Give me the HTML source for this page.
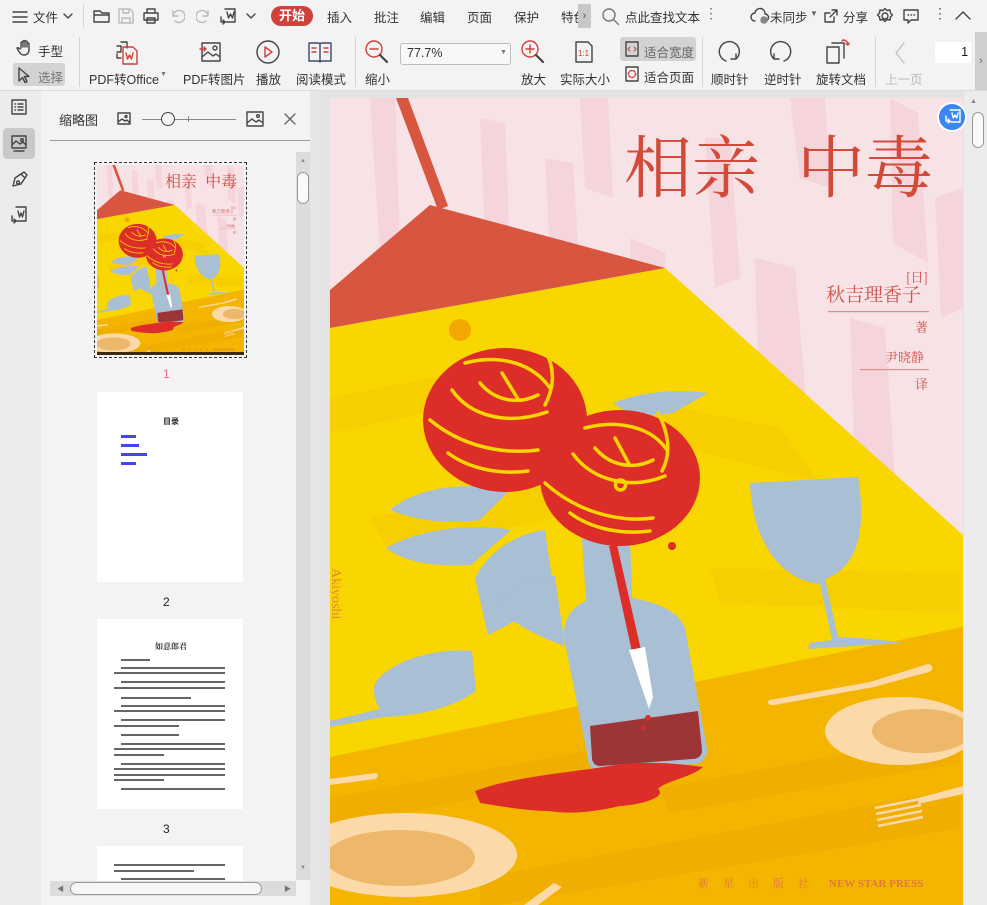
<!DOCTYPE html>
<html><head><meta charset="utf-8">
<style>
*{margin:0;padding:0;box-sizing:border-box}
body{width:987px;height:905px;overflow:hidden;background:#e6e6e6;font-family:"Liberation Sans","Noto Sans CJK SC",sans-serif;font-size:13px;color:#222;position:relative}
.a{position:absolute;white-space:nowrap}
.t{font-size:12.5px;color:#333}
svg.i{position:absolute;fill:none;stroke:#444;stroke-width:1.4;stroke-linecap:round;stroke-linejoin:round}
.sep{position:absolute;width:1px;background:#d4d4d4}
.ln{position:absolute;height:5px;background:#333;opacity:.75}
</style></head><body>
<div class="a" style="left:0;top:0;width:987px;height:91px;background:#f3f3f3;border-bottom:1px solid #dcdcdc"></div>
<svg class="i" style="left:11px;top:9px" width="18" height="16"><path d="M2 3h14M2 8h14M2 13h14"/></svg>
<div class="a t" style="left:33px;top:7px">文件</div>
<svg class="i" style="left:62px;top:11px" width="12" height="10" ><path d="M2 3l4 4 4-4"/></svg>
<div class="sep" style="left:83px;top:4px;height:24px"></div>
<svg class="i" style="left:92px;top:7px" width="20" height="18"><path d="M2 4h6l2 2h7v9H2z M2 8h15"/></svg>
<svg class="i" style="left:117px;top:7px;stroke:#bbb" width="18" height="18"><path d="M2 2h11l3 3v11H2z M6 2v4h6V2 M5 16v-5h8v5"/></svg>
<svg class="i" style="left:142px;top:7px" width="18" height="18"><path d="M5 6V2h8v4 M2 6h14v7H2z M5 11h8v5H5z"/></svg>
<svg class="i" style="left:169px;top:8px;stroke:#bbb" width="16" height="16"><path d="M4 3v5h5 M4 8a6 6 0 1 1 2 5"/></svg>
<svg class="i" style="left:196px;top:8px;stroke:#bbb" width="16" height="16"><path d="M12 3v5H7 M12 8a6 6 0 1 0-2 5"/></svg>
<svg class="i" style="left:218px;top:6px" width="20" height="20"><path d="M7 3h10v13H8 M9 6l1.5 6 2-4 2 4 1.5-6 M3 11v5h4 M5 14l2 2-2 2"/></svg>
<svg class="i" style="left:245px;top:11px" width="12" height="10"><path d="M2 3l4 4 4-4"/></svg>
<div class="a" style="left:271px;top:6px;width:42px;height:20px;border-radius:10px;background:#d0403c;color:#fff;font-size:13px;line-height:20px;text-align:center;font-weight:bold">开始</div>
<div class="a t" style="left:327px;top:7px">插入</div>
<div class="a t" style="left:374px;top:7px">批注</div>
<div class="a t" style="left:420px;top:7px">编辑</div>
<div class="a t" style="left:467px;top:7px">页面</div>
<div class="a t" style="left:514px;top:7px">保护</div>
<div class="a t" style="left:561px;top:7px;width:17px;overflow:hidden">特色</div>
<div class="a" style="left:578px;top:4px;width:13px;height:24px;background:#c8c8c8;color:#555;font-size:11px;line-height:24px;text-align:center">›</div>
<svg class="i" style="left:601px;top:7px;stroke:#777" width="20" height="20"><circle cx="8" cy="8" r="6"/><path d="M12.5 12.5l5 5"/></svg>
<div class="a t" style="left:625px;top:7px">点此查找文本</div>
<div class="a" style="left:704px;top:5px;color:#666;font-size:14px">⋮</div>
<svg class="i" style="left:750px;top:7px" width="20" height="18"><path d="M5 14a4 4 0 0 1 0-8 5 5 0 0 1 10 1 3.5 3.5 0 0 1 0 7"/><circle cx="14" cy="13" r="3" fill="#888" stroke="#888"/></svg>
<div class="a t" style="left:770px;top:7px">未同步</div>
<div class="a" style="left:810px;top:9px;font-size:8px;color:#666">▼</div>
<svg class="i" style="left:822px;top:7px" width="18" height="18"><path d="M10 3h5v5 M15 3l-7 7 M12 10v5H3V6h5"/></svg>
<div class="a t" style="left:843px;top:7px">分享</div>
<svg class="i" style="left:876px;top:7px" width="18" height="18"><circle cx="9" cy="9" r="3"/><path d="M9 1.5l2 2 3-.5.5 3 2 2-2 2-.5 3-3-.5-2 2-2-2-3 .5-.5-3-2-2 2-2 .5-3 3 .5z"/></svg>
<svg class="i" style="left:902px;top:7px" width="18" height="18"><path d="M2 3h14v10H9l-3 3v-3H2z M6 8h.5M9 8h.5M12 8h.5"/></svg>
<div class="a" style="left:933px;top:5px;color:#555;font-size:14px">⋮</div>
<svg class="i" style="left:954px;top:9px" width="18" height="12"><path d="M2 10l7-7 7 7"/></svg>

<svg class="i" style="left:16px;top:39px" width="18" height="18"><path d="M5 9V4a1 1 0 0 1 2 0v4V2.5a1 1 0 0 1 2 0V8V3a1 1 0 0 1 2 0v5V5a1 1 0 0 1 2 0v6c0 3-2 5-5 5s-4-2-6-5l-1-2c1-1 2 0 3 1"/></svg>
<div class="a t" style="left:38px;top:41px">手型</div>
<div class="a" style="left:13px;top:63px;width:52px;height:23px;background:#d3d3d3;border-radius:3px"></div>
<svg class="i" style="left:17px;top:66px" width="14" height="18"><path d="M2 2v13l3.5-3.5 2.5 5 2-1-2.5-5H12z"/></svg>
<div class="a t" style="left:38px;top:67px;color:#777">选择</div>
<div class="sep" style="left:79px;top:37px;height:50px"></div>
<svg class="i" style="left:113px;top:38px" width="28" height="28"><path d="M8 4h6v6 M4 8h4v6H4 M4 16v4h4" stroke="#444"/><path d="M13 15l1.5 6 2-4 2 4 1.5-6" stroke="#d0403c"/><path d="M10 9h10l4 4v13H10z" stroke="#d0403c"/></svg>
<div class="a t" style="left:89px;top:69px">PDF转Office</div>
<div class="a" style="left:160px;top:71px;font-size:7px;color:#777">▼</div>
<svg class="i" style="left:199px;top:40px" width="24" height="24"><path d="M3 3h18v18H3z M3 17l6-5 5 4 3-2 4 3"/><circle cx="16" cy="8" r="2"/><path d="M1 9h6M5 7l2 2-2 2" stroke="#d0403c"/></svg>
<div class="a t" style="left:183px;top:69px">PDF转图片</div>
<svg class="i" style="left:255px;top:39px" width="26" height="26"><circle cx="13" cy="13" r="11"/><path d="M10 8l7 5-7 5z" stroke="#d0403c"/></svg>
<div class="a t" style="left:256px;top:69px">播放</div>
<svg class="i" style="left:307px;top:41px;stroke:#3a4a6a" width="26" height="22"><path d="M2 2h10l1 1 1-1h10v18H14l-1 1-1-1H2z M13 3v17"/><path d="M5 7h4M5 11h4M17 7h4M17 11h4" stroke="#d0403c"/></svg>
<div class="a t" style="left:296px;top:69px">阅读模式</div>
<div class="sep" style="left:355px;top:37px;height:50px"></div>
<svg class="i" style="left:364px;top:39px" width="26" height="26"><circle cx="10" cy="10" r="8" stroke="#d0403c"/><path d="M6 10h8" stroke="#d0403c"/><path d="M16 16l7 7" stroke-width="2.2"/></svg>
<div class="a t" style="left:365px;top:69px">缩小</div>
<div class="a" style="left:400px;top:43px;width:111px;height:22px;background:#f8f8f8;border:1px solid #bdbdbd;border-radius:3px"></div>
<div class="a" style="left:407px;top:46px;font-size:12.5px;color:#333">77.7%</div>
<div class="a" style="left:500px;top:49px;font-size:7px;color:#777">▼</div>
<svg class="i" style="left:520px;top:39px" width="26" height="26"><circle cx="10" cy="10" r="8" stroke="#d0403c"/><path d="M6 10h8M10 6v8" stroke="#d0403c"/><path d="M16 16l7 7" stroke-width="2.2"/></svg>
<div class="a t" style="left:521px;top:69px">放大</div>
<svg class="i" style="left:574px;top:40px" width="20" height="24"><path d="M2 2h12l4 4v16H2z"/><text x="4" y="16" font-size="8" fill="#d0403c" stroke="none" font-family="Liberation Sans">1:1</text></svg>
<div class="a t" style="left:560px;top:69px">实际大小</div>
<div class="a" style="left:620px;top:37px;width:76px;height:24px;background:#d3d3d3;border-radius:3px"></div>
<svg class="i" style="left:625px;top:41px" width="14" height="16"><path d="M1 1h12v14H1z"/><path d="M5 6l-2 2 2 2M9 6l2 2-2 2" stroke="#d0403c" stroke-width="1"/></svg>
<div class="a t" style="left:644px;top:42px;color:#666">适合宽度</div>
<svg class="i" style="left:625px;top:66px" width="14" height="16"><path d="M1 1h12v14H1z"/><circle cx="7" cy="8" r="3.5" stroke="#d0403c" stroke-dasharray="2 1.5"/></svg>
<div class="a t" style="left:644px;top:67px">适合页面</div>
<div class="sep" style="left:702px;top:37px;height:50px"></div>
<svg class="i" style="left:716px;top:39px" width="26" height="26"><path d="M20 20a10 10 0 1 0-10 2 M20 15v5h-5"/></svg>
<div class="a t" style="left:711px;top:69px">顺时针</div>
<svg class="i" style="left:768px;top:39px" width="26" height="26"><path d="M6 20a10 10 0 1 1 10 2 M6 15v5h5"/></svg>
<div class="a t" style="left:764px;top:69px">逆时针</div>
<svg class="i" style="left:824px;top:38px" width="28" height="28"><path d="M3 9h12v16H3z M8 5h12v15"/><path d="M19 2a5 5 0 0 1 5 5 M22 6l2 1 1-2 M18 3l1-1" stroke="#d0403c"/></svg>
<div class="a t" style="left:816px;top:69px">旋转文档</div>
<div class="sep" style="left:875px;top:37px;height:50px"></div>
<svg class="i" style="left:893px;top:41px;stroke:#c0c0c0" width="14" height="24"><path d="M11 2L3 12l8 10"/></svg>
<div class="a t" style="left:885px;top:69px;color:#bbb">上一页</div>
<div class="a" style="left:935px;top:42px;width:36px;height:21px;background:#fff"></div>
<div class="a" style="left:961px;top:44px;font-size:13px">1</div>
<div class="a" style="left:975px;top:32px;width:12px;height:58px;background:#cfcfcf;color:#666;font-size:11px;line-height:58px;text-align:center">›</div>

<div class="a" style="left:0;top:91px;width:41px;height:814px;background:#ececec"></div>
<svg class="i" style="left:10px;top:98px" width="18" height="18"><path d="M2 2h14v14H2z M5 6h.5M8 6h5M5 9h.5M8 9h5M5 12h.5M8 12h5"/></svg>
<div class="a" style="left:3px;top:128px;width:32px;height:31px;background:#c9c9c9;border-radius:4px"></div>
<svg class="i" style="left:10px;top:134px" width="18" height="20"><path d="M2 2h14v12H2z M2 11l4-4 4 3 3-2 3 3 M4 17h10"/><circle cx="12" cy="6" r="1.3"/></svg>
<svg class="i" style="left:10px;top:170px" width="18" height="20"><path d="M3 16l2-8 6-4 4 4-4 6z M8 11a1.5 1.5 0 1 0 .1 0 M11 4l3-2 3 3-2 3"/></svg>
<svg class="i" style="left:10px;top:205px" width="18" height="20"><path d="M6 2h10v14H6 M8 6l1.5 6 1.5-4 1.5 4L14 6 M2 11v5h4 M4 14l2 2-2 2"/></svg>

<div class="a" style="left:41px;top:91px;width:269px;height:814px;background:#f3f3f3"></div>
<div class="a" style="left:59px;top:110px;font-size:13px;color:#333">缩略图</div>
<svg class="i" style="left:116px;top:111px" width="16" height="16"><path d="M2 2h12v11H2z M2 11l4-3 3 2 2-1 3 3"/><circle cx="10" cy="5.5" r="1"/></svg>
<div class="a" style="left:142px;top:119px;width:94px;height:1px;background:#888"></div>
<div class="a" style="left:188px;top:116px;width:1px;height:6px;background:#888"></div>
<div class="a" style="left:161px;top:112px;width:14px;height:14px;border-radius:50%;border:1.4px solid #444;background:#f3f3f3"></div>
<svg class="i" style="left:245px;top:110px" width="20" height="18"><path d="M2 2h16v14H2z M2 13l5-4 4 3 3-2 4 3"/><circle cx="13" cy="6" r="1.3"/></svg>
<svg class="i" style="left:283px;top:112px;stroke:#666" width="14" height="14"><path d="M2 2l10 10M12 2L2 12"/></svg>
<div class="a" style="left:50px;top:140px;width:260px;height:1px;background:#999"></div>
<div class="a" style="left:296px;top:152px;width:14px;height:728px;background:#dcdcdc"></div>
<div class="a" style="left:300px;top:158px;font-size:6px;color:#888">▲</div>
<div class="a" style="left:297px;top:172px;width:12px;height:32px;border-radius:6px;border:1px solid #999;background:#fafafa"></div>
<div class="a" style="left:300px;top:865px;font-size:6px;color:#888">▼</div>
<div class="a" style="left:50px;top:881px;width:246px;height:15px;background:#dcdcdc"></div>
<div class="a" style="left:57px;top:884px;font-size:7px;color:#777">◀</div>
<div class="a" style="left:284px;top:884px;font-size:7px;color:#777">▶</div>
<div class="a" style="left:70px;top:882px;width:192px;height:13px;border-radius:7px;border:1px solid #999;background:#f6f6f6"></div>

<div class="a" style="left:94px;top:162px;width:153px;height:196px;border:1px dashed #333"></div>
<svg class="a" style="left:97px;top:165px" width="147" height="190" viewBox="0 0 633 807" preserveAspectRatio="none"><use href="#cover"/></svg>
<div class="a" style="left:97px;top:352px;width:147px;height:3px;background:#3a2a10"></div>
<div class="a" style="left:163px;top:367px;font-size:12px;color:#e06a8a">1</div>
<div class="a" style="left:97px;top:392px;width:146px;height:190px;background:#fff"></div>
<div class="a" style="left:163px;top:416px;font-size:8px;font-weight:bold;color:#333">目录</div>
<div class="a" style="left:121px;top:435px;width:15px;height:3px;background:#44f"></div>
<div class="a" style="left:121px;top:444px;width:18px;height:3px;background:#44f"></div>
<div class="a" style="left:121px;top:453px;width:26px;height:3px;background:#44f"></div>
<div class="a" style="left:121px;top:462px;width:15px;height:3px;background:#44f"></div>
<div class="a" style="left:163px;top:595px;font-size:12px">2</div>
<div class="a" style="left:97px;top:619px;width:146px;height:190px;background:#fff"></div>
<div class="a" style="left:155px;top:641px;font-size:8px;font-weight:bold;color:#333;font-family:'Noto Serif CJK SC',serif">如意郎君</div>
<div class="ln" style="left:121px;top:659px;width:29px;height:2px"></div>
<div class="ln" style="left:121px;top:667px;width:104px;height:2px"></div><div class="ln" style="left:114px;top:672px;width:111px;height:2px"></div>
<div class="ln" style="left:121px;top:681px;width:104px;height:2px"></div><div class="ln" style="left:114px;top:687px;width:111px;height:2px"></div>
<div class="ln" style="left:121px;top:697px;width:70px;height:2px"></div>
<div class="ln" style="left:121px;top:705px;width:104px;height:2px"></div><div class="ln" style="left:114px;top:710px;width:111px;height:2px"></div>
<div class="ln" style="left:121px;top:719px;width:104px;height:2px"></div><div class="ln" style="left:114px;top:725px;width:65px;height:2px"></div>
<div class="ln" style="left:121px;top:734px;width:58px;height:2px"></div>
<div class="ln" style="left:121px;top:743px;width:104px;height:2px"></div><div class="ln" style="left:114px;top:748px;width:111px;height:2px"></div><div class="ln" style="left:114px;top:754px;width:50px;height:2px"></div>
<div class="ln" style="left:121px;top:763px;width:104px;height:2px"></div><div class="ln" style="left:114px;top:768px;width:111px;height:2px"></div><div class="ln" style="left:114px;top:774px;width:111px;height:2px"></div><div class="ln" style="left:114px;top:779px;width:50px;height:2px"></div>
<div class="ln" style="left:121px;top:788px;width:104px;height:2px"></div>
<div class="a" style="left:163px;top:822px;font-size:12px">3</div>
<div class="a" style="left:97px;top:846px;width:146px;height:35px;background:#fff"></div>
<div class="ln" style="left:114px;top:864px;width:111px;height:2px"></div><div class="ln" style="left:114px;top:870px;width:80px;height:2px"></div>
<div class="ln" style="left:121px;top:878px;width:104px;height:2px"></div>

<div class="a" style="left:320px;top:91px;width:667px;height:814px;background:#e3e3e3"></div>
<div class="a" style="left:964px;top:91px;width:23px;height:814px;background:#ececec"></div>
<div class="a" style="left:970px;top:98px;font-size:7px;color:#888">▲</div>
<div class="a" style="left:972px;top:112px;width:12px;height:36px;border-radius:6px;border:1px solid #999;background:#fafafa"></div>

<svg class="a" style="left:330px;top:98px" width="633" height="807" viewBox="0 0 633 807">
<defs>
<g id="cover">
<rect width="633" height="807" fill="#f7e2e6"/>
<g fill="#f6d4db">
<path d="M40 0h25l5 150-20 5z"/><path d="M150 20l25 5 5 130-25-15z"/><path d="M215 60l28 5 10 160-30-15z"/><path d="M300 140l35 15 8 200-40-40z"/><path d="M375 40l25 0 10 140-25 10z"/><path d="M425 160l40 10 15 180-50-20z"/><path d="M520 220l35 10 10 150-40-10z"/><path d="M560 0l28 15 10 150-35-20z"/><path d="M460 0h35l5 90-30-10z"/><path d="M605 100l28-10v120l-22 10z"/><path d="M250 0h28l5 100-28-10z"/>
</g>
<path d="M0 230L335 170L633 437V807H0z" fill="#f9d600"/>
<g fill="#f7cc00" opacity=".7"><path d="M0 300l200-40 40 25-240 50z"/><path d="M40 420l250-55 30 35-260 55z"/><path d="M300 300l150 30 40 55-190-50z"/><path d="M380 470l250 5v40l-240-10z"/></g>
<path d="M0 659L633 529V807H0z" fill="#f3b500"/>
<g fill="#eeaa00" opacity=".6"><path d="M0 700l300-55 20 20-320 65z"/><path d="M330 690l300-55v30l-290 50z"/><path d="M150 780l480-90v40l-480 80z"/></g>
<path d="M66 0h12l40 108-10 4z" fill="#d85540"/>
<path d="M100 107L335 170L0 230V192z" fill="#d85540"/>
<circle cx="130" cy="232" r="11" fill="#f1a800"/>
<g fill="#a9bfd3">
<path d="M60 412c30-25 80-28 120-20l-30 30c-35 5-65 0-90-10z"/><path d="M56 450c35-20 90-25 125-18l-40 35c-35 2-65-2-85-17z"/>
<path d="M145 480c15-30 45-45 70-48l8 55c-15 25-45 40-65 50z"/><path d="M165 510c15-25 40-32 60-32l10 70c-25-8-50-22-70-38z"/>
<path d="M283 305c30-12 65-14 95-10l-35 20c-25 5-45 2-60-10z"/>
<path d="M252 441L300 438L302 500C330 505 350 515 355 530L377 650C378 660 372 665 365 666L270 672C262 672 258 668 258 660L234 540C232 520 245 507 256 503Z"/>
<path d="M420 385l108-6c8 45 3 90-33 102l13 58c25 1 45 3 65 6l-95 6 2-6 22-3-12-56c-45-5-68-50-70-101z"/>
<path d="M45 585c18-25 65-35 97-32l4 40c-25 18-60 25-92 26l-54 10v-6l50-12c-6-8-7-18-5-26z"/>
</g>
<path d="M260 628L368 613L372 652C372 658 368 661 362 661L270 668C265 668 262 664 262 660Z" fill="#9d3436"/>
<path d="M145 693c40-15 95-18 140-26 30-4 60-2 88 2-10 10-38 14-45 22 10 8-18 16-38 17-20 5-50 9-70 5-25 0-50-5-70-8z" fill="#dd2d28"/>
<path d="M279 448l8-1 24 105-9 2z" fill="#dd2d28"/>
<path d="M299 552l16-3 8 50-4 12z" fill="#fff"/>
<circle cx="318" cy="620" r="3" fill="#dd2d28"/><circle cx="313" cy="630" r="2" fill="#dd2d28"/>
<g fill="#dd2d28"><ellipse cx="175" cy="322" rx="82" ry="72"/><ellipse cx="290" cy="380" rx="80" ry="68"/><circle cx="342" cy="448" r="4"/></g>
<g fill="none" stroke="#f9d500" stroke-width="3.5" stroke-linecap="round">
<path d="M135 265c30-8 65-3 85 25M122 292c18 26 55 36 95 22M150 285c15 18 38 22 58 12M172 275l16 26M100 322c30 25 70 35 108 30M215 252c10 18 10 36 0 55M118 355c20 15 50 22 80 18"/>
<path d="M255 330c30-8 65-3 82 22M243 356c20 27 58 36 92 22M265 350c15 18 38 22 58 12M285 340l14 26M215 385c30 27 70 40 108 35M328 315c10 18 14 40 4 58M290 382a5 5 0 1 0 1 0M240 415c20 15 50 22 80 18"/>
</g>
<ellipse cx="570" cy="633" rx="75" ry="34" fill="#fcd9a8"/><ellipse cx="592" cy="633" rx="50" ry="22" fill="#eeb86c"/>
<ellipse cx="75" cy="757" rx="112" ry="42" fill="#fcd9a8"/><ellipse cx="70" cy="760" rx="75" ry="28" fill="#eeb86c"/>
<path d="M440 602l100-18 58-18c5 0 6 6 1 8l-55 15-100 18c-6 1-8-4-4-5z" fill="#fcd9a8"/>
<path d="M0 681l45-6c4 0 3 5 0 6l-45 6z" fill="#fcd9a8"/>
<path d="M545 710l45-9 M546 716l45-9 M547 722l45-9 M548 728l45-9" stroke="#fcd9a8" stroke-width="2.5" fill="none"/>
<path d="M588 700l45-12v8l-45 10z" fill="#fcd9a8"/>
<path d="M194 807l30-22 8 4-24 18z" fill="#fcd9a8"/>
<text x="294" y="94" font-size="68" fill="#d24b3a" font-family="Noto Serif CJK SC,serif">相亲</text>
<text x="467" y="94" font-size="68" fill="#d24b3a" font-family="Noto Serif CJK SC,serif">中毒</text>
<text x="576" y="184" font-size="13" fill="#d2504a" font-family="Noto Serif CJK SC,serif">[日]</text>
<text x="496" y="203" font-size="19" fill="#d2504a" font-family="Noto Serif CJK SC,serif">秋吉理香子</text>
<rect x="498" y="213" width="101" height="1.2" fill="#e09088"/>
<text x="585" y="234" font-size="13" fill="#d2504a" font-family="Noto Serif CJK SC,serif">著</text>
<text x="555" y="264" font-size="13" fill="#d2504a" font-family="Noto Serif CJK SC,serif">尹晓静</text>
<rect x="530" y="271" width="69" height="1.2" fill="#e09088"/>
<text x="585" y="291" font-size="13" fill="#d2504a" font-family="Noto Serif CJK SC,serif">译</text>
<text transform="translate(2,470) rotate(90)" font-size="14" fill="#e08a3a" font-family="Liberation Serif,serif">Akiyoshi</text>
<text x="368" y="789" font-size="11" fill="#e07a3a" font-family="Noto Serif CJK SC,serif" letter-spacing="14">新星出版社</text>
<text x="499" y="789" font-size="11" fill="#e07a3a" font-family="Liberation Serif,serif" font-weight="bold">NEW STAR PRESS</text>
</g>
</defs>
<use href="#cover"/>
</svg>
<div class="a" style="left:937px;top:102px;width:30px;height:30px;border-radius:50%;background:#3b86f0;border:2px solid #fff"></div>
<svg class="i" style="left:943px;top:108px;stroke:#fff" width="20" height="18"><path d="M7 2h10v12H8 M9 5l1.3 5 1.7-3 1.7 3L15 5 M3 8v5h4 M5 11l2 2-2 2"/></svg>
</body></html>
